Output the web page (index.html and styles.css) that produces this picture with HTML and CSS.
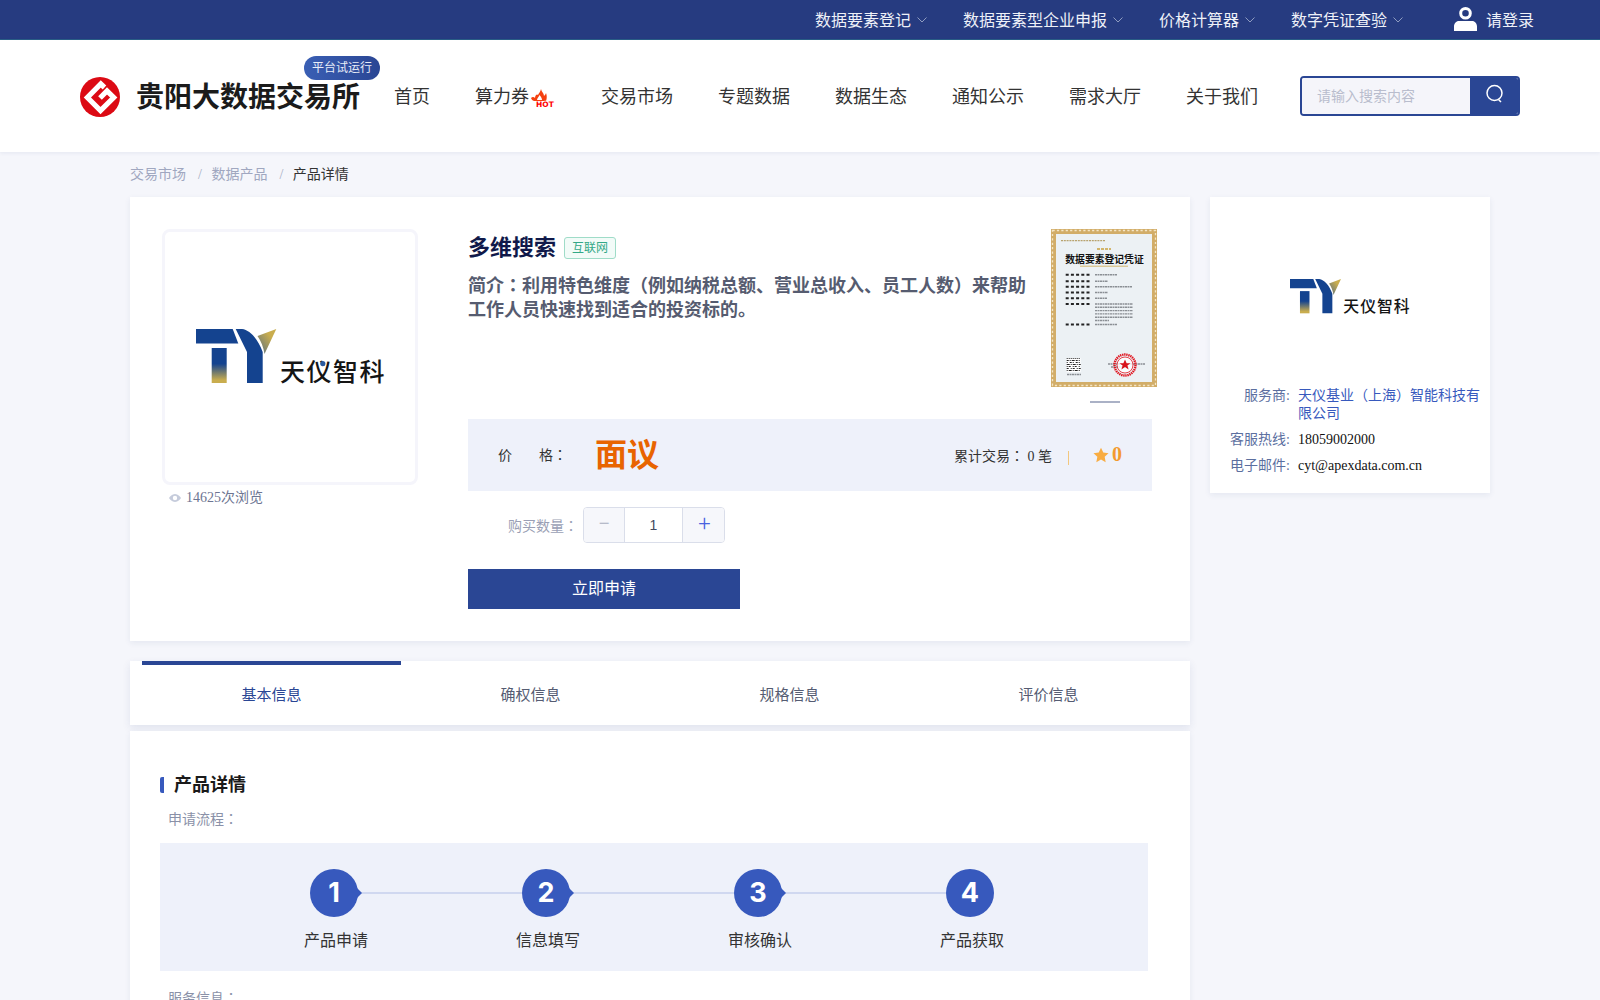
FILE: index.html
```html
<!DOCTYPE html>
<html lang="zh-CN">
<head>
<meta charset="utf-8">
<title>多维搜索 - 贵阳大数据交易所</title>
<link rel="stylesheet" href="styles.css">
</head>
<body>
<svg class="defs" width="0" height="0" aria-hidden="true">
  <defs>
    <linearGradient id="stemGrad" x1="0" y1="0" x2="0" y2="1">
      <stop offset="0.45" stop-color="#14438f"/>
      <stop offset="0.92" stop-color="#c9ad4e"/>
    </linearGradient>
    <linearGradient id="wingGrad" x1="0" y1="1" x2="1" y2="0">
      <stop offset="0.15" stop-color="#6d7a78"/>
      <stop offset="0.7" stop-color="#c9ad4e"/>
    </linearGradient>
    <symbol id="tylogo" viewBox="0 0 189 55">
      <path d="M0 0H36.700L42.300 14.500H0Z" fill="#14438f"/>
      <path d="M15.700 19H30.700V54H15.700Z" fill="url(#stemGrad)"/>
      <path d="M39.700 0H46C54 1 62 10 66.700 23V54H51V23Z" fill="#14438f"/>
      <path d="M61.500 7 80.300 0 68.500 25C67.500 18 65 12 61.500 7Z" fill="url(#wingGrad)"/>
      <text x="84" y="52" class="logo-text">天仪智科</text>
      <circle cx="126.800" cy="34.500" r="2.600" fill="#2a5a9f"/>
    </symbol>
  </defs>
</svg>

<div class="topbar">
  <a class="top-item"><span class="top-label">数据要素登记</span><svg class="chev" viewBox="0 0 10 6"><path d="M.5.5 5 5 9.500.5"/></svg></a>
  <a class="top-item"><span class="top-label">数据要素型企业申报</span><svg class="chev" viewBox="0 0 10 6"><path d="M.5.5 5 5 9.500.5"/></svg></a>
  <a class="top-item"><span class="top-label">价格计算器</span><svg class="chev" viewBox="0 0 10 6"><path d="M.5.5 5 5 9.500.5"/></svg></a>
  <a class="top-item"><span class="top-label">数字凭证查验</span><svg class="chev" viewBox="0 0 10 6"><path d="M.5.5 5 5 9.500.5"/></svg></a>
  <a class="top-login">
    <svg class="user-icon" viewBox="0 0 23 24"><path fill="#fff" fill-rule="evenodd" d="M11.500 0a6 6 0 1 1 0 12.600 6 6 0 0 1 0-12.600Zm0 3a3.200 3.200 0 1 0 0 6.600 3.200 3.200 0 0 0 0-6.600ZM5 14h13c3 0 5 2.500 5 5.500V24H0v-4.500C0 16.500 2 14 5 14Z"/></svg>
    <span class="top-label">请登录</span>
  </a>
</div>

<header class="header">
  <svg class="brand-logo" viewBox="0 0 40 40">
    <circle cx="20" cy="20" r="20" fill="#dc0a14"/>
    <path fill="none" stroke="#fff" stroke-width="5.200" stroke-miterlimit="6" d="M24.500 10.500 20.800 7 7.400 20.500 20.500 33.600 33.700 20.500 27 14 20 21"/>
  </svg>
  <div class="brand-name">贵阳大数据交易所<span class="brand-badge">平台试运行</span></div>
  <nav class="nav">
    <a>首页</a>
    <a class="nav-hot">算力券<svg class="hot-icon" viewBox="0 0 26 20"><path fill="#f5400f" d="M2 10C3.500 8.500 5 9 6 10 6 7.500 8 5.500 9 7 10 5 11.500 3.500 12 1 12.500 4 15 5 15 8 16 7 16.500 6.500 17 5 18 8 18 10 17 13H5C3.500 12.500 2.500 11.500 2 10Z"/><path fill="#fff" d="M8 12C8 10 10 9 10.500 7 12 9 13 10 13 12Z"/><text x="7" y="18.500" class="hot-text">HOT</text></svg></a>
    <a>交易市场</a>
    <a>专题数据</a>
    <a>数据生态</a>
    <a>通知公示</a>
    <a>需求大厅</a>
    <a>关于我们</a>
  </nav>
  <div class="search">
    <div class="search-input">请输入搜索内容</div>
    <div class="search-btn"><svg viewBox="0 0 20 20" width="20" height="20"><circle cx="9.500" cy="9" r="7.500"/><path d="M13.500 15.500 16 18"/></svg></div>
  </div>
</header>

<div class="crumbs">
  <span>交易市场</span><i>/</i><span>数据产品</span><i>/</i><b>产品详情</b>
</div>

<main class="layout">
  <div class="col-main">
    <section class="card product">
      <div class="gallery">
        <div class="logo-box"><svg class="logo-big"><use href="#tylogo"/></svg></div>
        <div class="views">
          <svg viewBox="0 0 12 8" width="12" height="8"><path fill="#c5cbdb" fill-rule="evenodd" d="M6 0c3 0 5 2.500 6 4-1 1.500-3 4-6 4S1 5.500 0 4c1-1.500 3-4 6-4Zm0 1.800a2.200 2.200 0 1 0 0 4.400 2.200 2.200 0 0 0 0-4.400Z"/></svg>
          14625次浏览
        </div>
      </div>
      <div class="detail">
        <div class="detail-head">
          <div class="detail-text">
            <div class="title-row"><h1>多维搜索</h1><span class="tag">互联网</span></div>
            <p class="intro">简介<span class="colon" lang="zh-TW">：</span>利用特色维度（例如纳税总额、营业总收入、员工人数）来帮助工作人员快速找到适合的投资标的。</p>
          </div>
          <div class="cert-col">
            <svg class="cert" viewBox="0 0 107 158">
              <rect width="106" height="158" fill="#d2ad68"/>
              <rect x="1.500" y="1.500" width="103" height="155" fill="none" stroke="#f4e6c6" stroke-width="1.300" stroke-dasharray="2.200 2.200"/>
              <rect x="5" y="5" width="96" height="148" fill="#ecf1f4"/>
              <path d="M10 11.700H54" stroke="#b8a36e" stroke-width="1.200" stroke-dasharray="2 .8"/>
              <path d="M46 20h14" stroke="#d2b56c" stroke-width="2" stroke-dasharray="3 1"/>
              <path d="M29 37.200h48" stroke="#d2b56c" stroke-width="1"/>
              <text x="53.500" y="34" class="cert-title">数据要素登记凭证</text>
              <g class="cert-labels">
                <path d="M14.700 45.700H39M14.700 52.300H39M14.700 57.800H39M14.700 63.500H39M14.700 69.300H39M14.700 75H39M14.700 95.500H39"/>
              </g>
              <g class="cert-values">
                <path d="M44 45.700H66M44 52.300H57M44 57.800H81M44 63.500H57M44 69.300H56M44 75H82M44 78.300H82M44 81.600H82M44 84.900H82M44 88.200H82M44 91.500H58M44 95.500H66M57 135H94M60 138H78M16 145.500H30"/>
              </g>
              <rect x="15.700" y="129" width="14" height="14" fill="#fff"/>
              <g class="cert-qr">
                <path stroke-dasharray="1 1" d="M15.700 129.500H29.700"/>
                <path stroke-dasharray="2 1 1 1 3 1" d="M15.700 131.500H29.700"/>
                <path stroke-dasharray="1 2 2 1" d="M15.700 133.500H29.700"/>
                <path stroke-dasharray="3 1 1 1" d="M15.700 135.500H29.700"/>
                <path stroke-dasharray="1 1 2 2" d="M15.700 137.500H29.700"/>
                <path stroke-dasharray="2 2 1 1" d="M15.700 139.500H29.700"/>
                <path stroke-dasharray="1 1 3 1" d="M15.700 141.500H29.700"/>
              </g>
              <circle cx="74" cy="136" r="10.500" fill="none" stroke="#e0141e" stroke-width="2.400" stroke-dasharray="1.400 .7"/>
              <circle cx="74" cy="136" r="8" fill="#fff" fill-opacity=".8" stroke="#e0141e" stroke-width=".8"/>
              <path d="M74 130.500l1.600 3.700H79.500l-3.100 2.400 1.200 3.800-3.600-2.400-3.600 2.400 1.200-3.800-3.100-2.400h3.900Z" fill="#d8121c"/>
            </svg>
            <div class="cert-line"></div>
          </div>
        </div>
        <div class="price-bar">
          <span class="price-label"><span>价</span><span>格<span class="colon" lang="zh-TW">：</span></span></span>
          <span class="price-value">面议</span>
          <span class="trades">累计交易<span class="colon" lang="zh-TW">：</span> 0 笔</span>
          <span class="divider"></span>
          <svg class="star" viewBox="0 0 24 24" width="16" height="16"><path fill="#f8ac42" d="M12 1l3.400 7.300 7.900 1-5.800 5.500 1.500 7.900-7-3.900-7 3.900 1.500-7.900L.7 9.300l7.900-1Z"/></svg>
          <span class="score">0</span>
        </div>
        <div class="qty-row">
          <span class="qty-label">购买数量<span class="colon" lang="zh-TW">：</span></span>
          <div class="qty">
            <span class="qty-btn minus">−</span>
            <span class="qty-val">1</span>
            <span class="qty-btn plus">+</span>
          </div>
        </div>
        <a class="apply">立即申请</a>
      </div>
    </section>

    <section class="card tabs">
      <a class="tab active">基本信息</a>
      <a class="tab">确权信息</a>
      <a class="tab">规格信息</a>
      <a class="tab">评价信息</a>
    </section>

    <section class="card info">
      <h2>产品详情</h2>
      <div class="sub">申请流程<span class="colon" lang="zh-TW">：</span></div>
      <div class="flow">
        <div class="step"><div class="step-top"><span class="dot">1</span><span class="link"></span></div><div class="step-name">产品申请</div></div>
        <div class="step"><div class="step-top"><span class="dot">2</span><span class="link"></span></div><div class="step-name">信息填写</div></div>
        <div class="step"><div class="step-top"><span class="dot">3</span><span class="link"></span></div><div class="step-name">审核确认</div></div>
        <div class="step"><div class="step-top"><span class="dot last">4</span></div><div class="step-name">产品获取</div></div>
      </div>
      <div class="sub service">服务信息<span class="colon" lang="zh-TW">：</span></div>
    </section>
  </div>

  <aside class="card vendor">
    <svg class="logo-small"><use href="#tylogo"/></svg>
    <dl class="vendor-info">
      <div class="row"><dt>服务商:</dt><dd class="link-text">天仪基业（上海）智能科技有限公司</dd></div>
      <div class="row"><dt>客服热线:</dt><dd>18059002000</dd></div>
      <div class="row"><dt>电子邮件:</dt><dd>cyt@apexdata.com.cn</dd></div>
    </dl>
  </aside>
</main>
</body>
</html>
```
FILE: styles.css
```css
* { box-sizing: border-box; }
html, body { margin: 0; padding: 0; height: 1000px; overflow: hidden; }
body {
  background: #f5f6fb;
  font-family: "Liberation Serif", "Noto Sans CJK SC", serif;
  color: #222;
  font-size: 14px;
}
.defs { position: absolute; }
.colon { font-family: "Noto Sans CJK TC", sans-serif; line-height: 0; }
.logo-text { font-family: "Noto Sans CJK SC", sans-serif; font-size: 25px; font-weight: 500; fill: #151515; letter-spacing: 1.500px; }
.hot-text { font-family: "DejaVu Sans", sans-serif; font-weight: 700; font-size: 7.500px; fill: #f00; stroke: #fff; stroke-width: 1.200px; paint-order: stroke; }
.cert-title { font-family: "Noto Sans CJK SC", sans-serif; font-size: 9.800px; font-weight: 700; fill: #111; text-anchor: middle; }
.cert-labels path { fill: none; stroke: #222; stroke-width: 2; stroke-dasharray: 3 2.200; }
.cert-values path { fill: none; stroke: #8a8f94; stroke-width: 1.400; stroke-dasharray: 2 .5; }
.cert-qr path { fill: none; stroke: #222; stroke-width: 1.200; }

/* top bar */
.topbar {
  height: 40px;
  background: #263b80;
  border-bottom: 1px solid #2a5f86;
  display: flex;
  align-items: center;
  justify-content: flex-end;
  padding-right: 66px;
  color: #eef1f8;
  font-size: 16px;
}
.top-label { position: relative; top: -1px; }
.top-item { display: flex; align-items: center; margin-right: 36px; }
.chev { width: 10px; height: 6px; margin-left: 6px; fill: none; stroke: #8f9cc0; stroke-width: 1; }
.top-login { display: flex; align-items: center; margin-left: 15px; }
.user-icon { width: 23px; height: 24px; margin-right: 9px; margin-top: -2px; }

/* header */
.header {
  height: 112px;
  background: #fff;
  display: flex;
  align-items: center;
  padding-left: 80px;
  box-shadow: 0 1px 4px rgba(30, 50, 120, .08);
  position: relative;
}
.brand-logo { width: 40px; height: 40px; flex: none; margin-top: 1px; }
.brand-name {
  margin-left: 16px;
  margin-top: -2px;
  font-size: 28px;
  font-weight: 700;
  color: #1b1b1b;
  position: relative;
  white-space: nowrap;
  width: 224px;
}
.brand-badge {
  position: absolute;
  left: 168px;
  top: -19px;
  width: 76px;
  height: 24px;
  border-radius: 12px;
  background: linear-gradient(90deg, #3a5fb4, #2a4694);
  color: #e8edf8;
  font-size: 12px;
  font-weight: 400;
  line-height: 24px;
  text-align: center;
}
.nav { display: flex; align-items: center; gap: 45px; margin-left: 34px; margin-top: -2px; font-size: 18px; color: #333; }
.nav a { white-space: nowrap; }
.nav-hot { display: flex; align-items: center; }
.hot-icon { width: 26px; height: 20px; margin-top: 6px; margin-right: 1px; }
.search { display: flex; width: 220px; height: 40px; margin-left: 42px; border: 2px solid #2a4694; border-radius: 4px; overflow: hidden; }
.search-input { flex: 1; background: #f5f5fa; color: #b9bdcd; font-size: 14px; line-height: 38px; padding-left: 15px; }
.search-btn { width: 48px; background: #2a4694; display: flex; align-items: center; justify-content: center; padding: 0 0 5px 2px; }
.search-btn svg { fill: none; stroke: #fff; stroke-width: 1.500; }

/* breadcrumb */
.crumbs { height: 45px; padding-left: 130px; padding-top: 13px; line-height: 20px; color: #a0a7c0; white-space: nowrap; }
.crumbs i { font-style: normal; margin: 0 9.500px 0 12px; color: #a8aec4; }
.crumbs b { font-weight: 400; color: #333; }

/* layout */
.layout { display: flex; align-items: flex-start; gap: 20px; padding-left: 130px; }
.col-main { width: 1060px; flex: none; }
.card { background: #fff; box-shadow: 0 2px 6px rgba(40, 60, 120, .08); }

/* product */
.product { display: flex; padding: 32px; gap: 50px; height: 444px; }
.gallery { width: 256px; flex: none; }
.logo-box { width: 256px; height: 256px; border: 3px solid #f5f5fb; border-radius: 8px; display: flex; align-items: center; justify-content: center; }
.logo-big { width: 189px; height: 55px; margin-top: -1px; }
.views { display: flex; align-items: center; gap: 5px; margin-top: 3px; padding-left: 7px; color: #6d7592; line-height: 20px; }
.detail { flex: 1; }
.detail-head { display: flex; justify-content: space-between; height: 190px; }
.detail-text { width: 562px; }
.title-row { display: flex; align-items: center; height: 36px; margin-top: 1px; }
h1 { margin: 0; font-size: 22px; line-height: 36px; font-weight: 700; color: #10194a; }
.tag { margin-left: 8px; height: 22px; width: 52px; text-align: center; line-height: 20px; border: 1px solid #9fdcc8; border-radius: 3px; background: #f2fbf8; color: #33a887; font-size: 12px; }
.intro { margin: 8px 0 0; font-size: 18px; line-height: 24px; font-weight: 700; color: #565c70; }
.cert-col { width: 107px; display: flex; flex-direction: column; align-items: center; }
.cert { width: 107px; height: 158px; display: block; }
.cert-line { width: 30px; height: 2px; background: #aab1c6; margin-top: 14px; }
.price-bar { width: 684px; height: 72px; background: #eef1fa; display: flex; align-items: center; padding-left: 30px; color: #333; }
.price-label { display: flex; justify-content: space-between; width: 69px; margin-top: -2px; }
.price-value { margin-left: 28px; font-size: 32px; font-weight: 700; color: #e86400; flex: 1; margin-top: -6px; }
.trades { width: 98px; white-space: nowrap; }
.divider { width: 1px; height: 14px; background: #f3c77e; margin: 6px 24px 0 16px; }
.star { margin-top: -1px; }
.score { margin-left: 3px; margin-right: 30px; font-size: 20px; font-weight: 700; color: #f39a2e; margin-top: -2px; }
.qty-row { display: flex; align-items: center; margin-top: 16px; padding-left: 40px; }
.qty-label { width: 75px; color: #9a9fb5; margin-top: -1px; white-space: nowrap; }
.qty { display: flex; width: 142px; height: 36px; border: 1px solid #dadeea; border-radius: 4px; overflow: hidden; }
.qty-btn { background: #f6f7fb; text-align: center; line-height: 31px; font-size: 22px; font-family: Roboto, sans-serif; font-weight: 300; }
.minus { width: 40px; color: #a8aec0; }
.plus { width: 41px; padding-left: 2px; color: #4a63e0; }
.qty-val { width: 59px; border-left: 1px solid #dadeea; border-right: 1px solid #dadeea; text-align: center; line-height: 34px; font-family: "Liberation Sans", sans-serif; color: #444a60; }
.apply { display: block; width: 272px; height: 40px; margin-top: 26px; background: #2a4694; color: #fff; text-align: center; font-size: 16px; line-height: 39px; }

/* tabs */
.tabs { display: flex; height: 64px; margin-top: 20px; padding: 0 12px; box-shadow: 0 3px 8px rgba(40, 60, 120, .1); }
.tab { flex: 1; text-align: center; font-size: 15px; line-height: 60px; padding-top: 4px; color: #555c72; }
.tab.active { color: #2a4694; border-top: 4px solid #2a4694; padding-top: 0; }

/* info */
.info { margin-top: 6px; padding: 46px 30px 0; height: 300px; }
h2 { margin: 0; height: 16px; line-height: 16px; font-size: 18px; font-weight: 700; color: #1a1a1a; border-left: 4px solid #3759bd; border-radius: 2px 0 0 2px; padding-left: 10px; }
.sub { margin-top: 17px; padding-left: 8px; color: #8a91a8; line-height: 20px; }
.flow { display: flex; margin-top: 13px; width: 988px; height: 128px; background: #eef1fa; padding: 26px 0 0 143px; }
.step { width: 212px; flex: none; }
.step-top { display: flex; align-items: center; height: 48px; margin-left: 7px; width: 212px; }
.dot { position: relative; width: 48px; height: 48px; flex: none; border-radius: 50%; background: #3759bd; color: #fff; font-family: Inter, sans-serif; font-weight: 700; font-size: 27px; line-height: 48px; text-align: center; }
.dot::after { content: ""; position: absolute; right: -4px; top: 19px; border-left: 5px solid #3759bd; border-top: 5px solid transparent; border-bottom: 5px solid transparent; }
.dot.last::after { display: none; }
.link { flex: none; width: 164px; height: 2px; background: #d0d8f0; }
.step-name { width: 64px; margin: 13px 0 0 1px; text-align: center; font-size: 16px; line-height: 22px; color: #333; white-space: nowrap; }
.service { margin-top: 18px; }

/* vendor */
.vendor { width: 280px; height: 296px; padding-top: 82px; }
.logo-small { display: block; width: 120px; height: 35px; margin-left: 80px; }
.vendor-info { margin: 73px 0 0; }
.row { display: flex; margin-bottom: 8px; line-height: 18px; }
dt { width: 80px; text-align: right; color: #5c6f9f; flex: none; }
dd { margin: 0 10px 0 8px; color: #111; }
.link-text { color: #3759bd; }
```
